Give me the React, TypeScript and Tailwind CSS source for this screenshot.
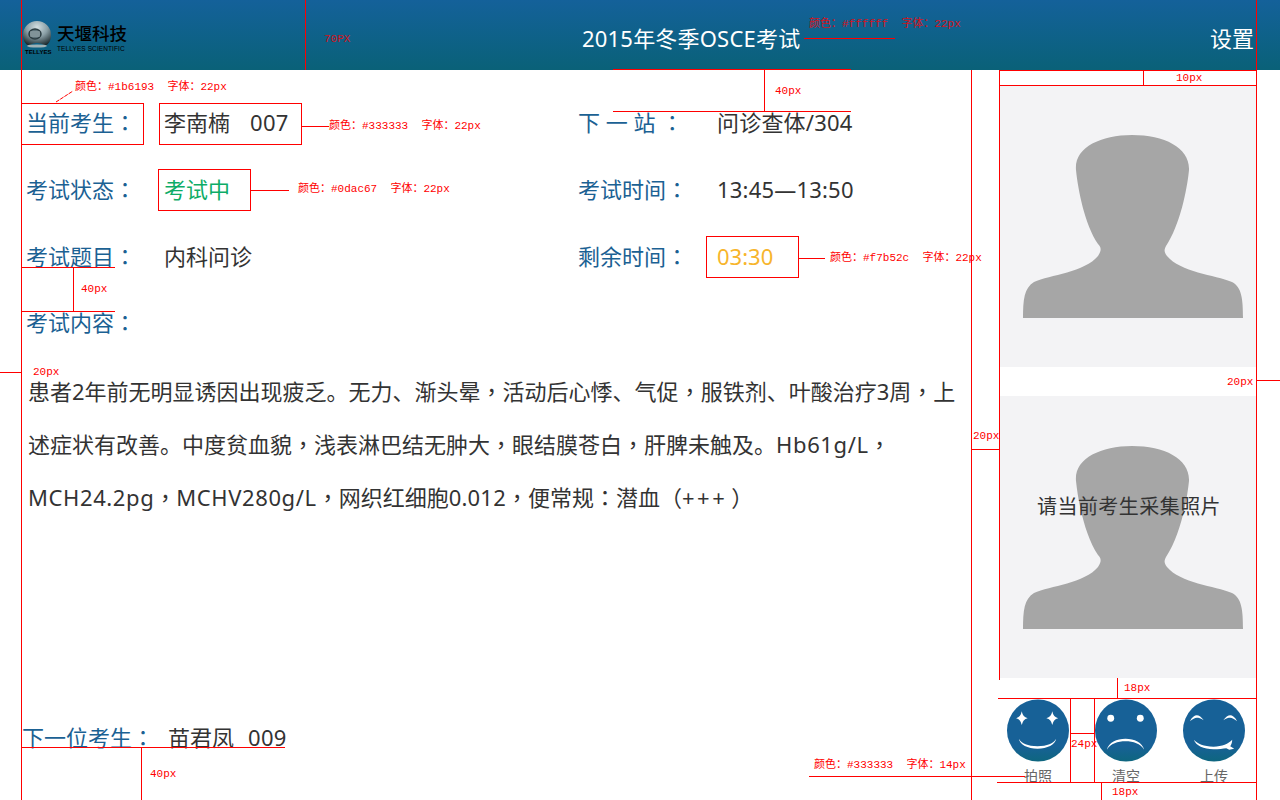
// 标注线和标注文字（设计稿上的红色标记）
const rules = [
  'left-[21px] top-0 w-px h-[800px]',
  'left-[305px] top-0 w-px h-[70px]',
  'left-[971px] top-[70px] w-px h-[730px]',
  'left-[999px] top-[70px] w-px h-[610px]',
  'left-[1256px] top-0 w-px h-[800px]',
  'left-[999px] top-[70px] w-[257px] h-px',
  'left-[999px] top-[85px] w-[257px] h-px',
  'left-[1143px] top-[70px] w-px h-[15px]',
  'left-[613px] top-[69px] w-[238px] h-px',
  'left-[613px] top-[111px] w-[238px] h-px',
  'left-[764px] top-[70px] w-px h-[41px]',
  'left-[804px] top-[38px] w-[91px] h-px',
  'left-[302px] top-[126px] w-[27px] h-px',
  'left-[251px] top-[190px] w-[38px] h-px',
  'left-[799px] top-[258px] w-[26px] h-px',
  'left-[21px] top-[267px] w-[94px] h-px',
  'left-[21px] top-[311px] w-[94px] h-px',
  'left-[73px] top-[267px] w-px h-[44px]',
  'left-0 top-[372px] w-[21px] h-px',
  'left-[971px] top-[449px] w-[28px] h-px',
  'left-[1256px] top-[380px] w-[24px] h-px',
  'left-[22px] top-[747px] w-[263px] h-px',
  'left-[141px] top-[748px] w-px h-[52px]',
  'left-[809px] top-[776px] w-[216px] h-px',
  'left-[998px] top-[698px] w-[258px] h-px',
  'left-[1117px] top-[678px] w-px h-[20px]',
  'left-[997px] top-[782px] w-[259px] h-px',
  'left-[1101px] top-[782px] w-px h-[18px]',
  'left-[1070px] top-[698px] w-px h-[84px]',
  'left-[1094px] top-[698px] w-px h-[84px]',
  'left-[1070px] top-[733px] w-[24px] h-px',
];

const boxes = [
  'left-[21px] top-[103px] w-[123px] h-[42px]',
  'left-[159px] top-[103px] w-[143px] h-[42px]',
  'left-[158px] top-[169px] w-[93px] h-[42px]',
  'left-[706px] top-[236px] w-[93px] h-[42px]',
];

const notes = [
  { text: '70PX', pos: 'left-[324px] top-[32px] opacity-80' },
  { text: '颜色：#ffffff  字体：22px', pos: 'left-[809px] top-[17px] opacity-80' },
  { text: '10px', pos: 'left-[1176px] top-[71px]' },
  { text: '40px', pos: 'left-[775px] top-[84px]' },
  { text: '颜色：#1b6193  字体：22px', pos: 'left-[75px] top-[80px]' },
  { text: '颜色：#333333  字体：22px', pos: 'left-[329px] top-[119px]' },
  { text: '颜色：#0dac67  字体：22px', pos: 'left-[298px] top-[182px]' },
  { text: '颜色：#f7b52c  字体：22px', pos: 'left-[830px] top-[251px]' },
  { text: '40px', pos: 'left-[81px] top-[282px]' },
  { text: '20px', pos: 'left-[33px] top-[365px]' },
  { text: '20px', pos: 'left-[973px] top-[429px]' },
  { text: '20px', pos: 'left-[1227px] top-[375px]' },
  { text: '40px', pos: 'left-[150px] top-[767px]' },
  { text: '颜色：#333333  字体：14px', pos: 'left-[814px] top-[758px]' },
  { text: '18px', pos: 'left-[1124px] top-[681px]' },
  { text: '18px', pos: 'left-[1112px] top-[785px]' },
  { text: '24px', pos: 'left-[1071px] top-[737px]' },
];

// 标点要居中，所以单独用 TC 字形
function Zh({ children }: { children: string }) {
  return (
    <>
      {children.split(/([，：（）])/).map((part, i) =>
        i % 2 === 1 ? (
          <span key={i} className="font-['Noto_Sans','Noto_Sans_CJK_TC',sans-serif]">
            {part}
          </span>
        ) : (
          part
        ),
      )}
    </>
  );
}

function Logo() {
  return (
    <div className="flex items-start gap-[6px] mt-[20px]">
      <div className="relative w-[29px] h-[38px]">
        <svg width="30" height="32" viewBox="0 0 30 32">
          <defs>
            <radialGradient id="sphere" cx="0.5" cy="0.25" r="0.75">
              <stop offset="0" stopColor="#d3dfe2" />
              <stop offset="0.5" stopColor="#8ba0a7" />
              <stop offset="1" stopColor="#1f2d31" />
            </radialGradient>
          </defs>
          <path d="M1 15A14 14 0 0 1 29 15C29 20 27 24 23 26C19 22 11 22 7 26C3 24 1 20 1 15Z" fill="url(#sphere)" />
          <ellipse cx="13" cy="14" rx="6" ry="5" fill="#5d7279" stroke="#2c3d42" strokeWidth="1.5" />
          <path d="M8 14h10M8 12h10M8 16h10" stroke="#c5d2d6" strokeWidth="0.7" />
          <ellipse cx="15" cy="26" rx="10" ry="1.6" fill="#9fb1b5" />
        </svg>
        <span className="absolute left-[3px] top-[28px] text-[6px] font-bold leading-[8px] text-black font-['Liberation_Sans',sans-serif] whitespace-nowrap">
          TELLYES
        </span>
      </div>
      <div className="pt-[1px]">
        <div className="text-[17.5px] leading-[24px] font-medium text-black font-['Noto_Sans_CJK_SC',sans-serif] whitespace-nowrap">
          天堰科技
        </div>
        <div className="text-[6.5px] leading-[8px] tracking-[0.1px] text-black font-['Liberation_Sans',sans-serif] whitespace-nowrap">
          TELLYES SCIENTIFIC
        </div>
      </div>
    </div>
  );
}

function Silhouette() {
  return (
    <svg className="block" width="257" height="282" viewBox="999 85 257 282">
      <path
        d="M1023 318C1023 300 1024 288 1034 282C1050 275 1085 272 1098 256C1102 250 1101 247 1098 244C1085 225 1078 190 1076 170C1074 148 1100 135 1132 135C1165 135 1190 148 1189 170C1187 190 1180 225 1166 246C1164 250 1164 252 1167 256C1180 272 1215 275 1232 282C1242 287 1243 300 1243 318Z"
        fill="#a6a6a6"
      />
    </svg>
  );
}

function FaceBase({ id, children }: { id: string; children: React.ReactNode }) {
  return (
    <svg width="62" height="63" viewBox="0 0 63 63">
      <defs>
        <linearGradient id={id} x1="0" y1="0" x2="0" y2="1">
          <stop offset="0" stopColor="#176197" />
          <stop offset="0.75" stopColor="#176197" />
          <stop offset="1" stopColor="#0e667f" />
        </linearGradient>
      </defs>
      <circle cx="31.5" cy="31.5" r="31.5" fill={`url(#${id})`} />
      {children}
    </svg>
  );
}

const star = (cx: number, cy: number) =>
  `M${cx} ${cy - 7}Q${cx + 1} ${cy - 1} ${cx + 6} ${cy}Q${cx + 1} ${cy + 1} ${cx} ${cy + 7}Q${cx - 1} ${cy + 1} ${cx - 6} ${cy}Q${cx - 1} ${cy - 1} ${cx} ${cy - 7}Z`;

function FaceCamera() {
  return (
    <FaceBase id="f1">
      <path d={star(15, 19)} fill="#fff" />
      <path d={star(46, 19)} fill="#fff" />
      <path d="M12 40C13 46 21 50 31 50C41 50 49 46 50 40C47 45 41 47.5 31 47.5C21 47.5 15 45 12 40Z" fill="#fff" />
    </FaceBase>
  );
}

function FaceClear() {
  return (
    <FaceBase id="f2">
      <circle cx="16" cy="19" r="3.5" fill="#fff" />
      <circle cx="46" cy="19" r="3.5" fill="#fff" />
      <path d="M12 51C14 44 22 40 31 40C40 40 48 44 50 51C46 45 39 42.5 31 42.5C23 42.5 16 45 12 51Z" fill="#fff" />
    </FaceBase>
  );
}

function FaceUpload() {
  return (
    <FaceBase id="f3">
      <path d="M7 22C9 18 12 16 14 16C16 16 19 18 21 21C18 19 16 18.5 14 18.5C12 18.5 10 20 7 22Z" fill="#fff" />
      <path d="M41 21C43 18 46 16 48 16C50 16 53 18 55 22C52 20 50 18.5 48 18.5C46 18.5 44 19 41 21Z" fill="#fff" />
      <path d="M11 41C13 47 21 50.5 31 50.5C36 50.5 41 50 44 49.5L47 51L52 50L48 47.5C49 46 50 44 50 41C46 45 40 48 31 48C21 48 15 45 11 41Z" fill="#fff" />
    </FaceBase>
  );
}

const tools = [
  { label: '拍照', Face: FaceCamera },
  { label: '清空', Face: FaceClear },
  { label: '上传', Face: FaceUpload },
];

function Field({ label, children }: { label: string; children: React.ReactNode }) {
  return (
    <div className="flex items-center h-[42px] mb-[25px] whitespace-pre">
      <span className="w-[138px] text-[#1b6193]">
        <Zh>{label}</Zh>
      </span>
      {children}
    </div>
  );
}

export default function App() {
  return (
    <div className="relative w-[1280px] h-[800px] overflow-hidden bg-white text-[22px] text-[#333333] font-['Noto_Sans','Noto_Sans_CJK_SC',sans-serif]">
      <header className="flex items-start justify-between h-[70px] pl-[22px] pr-[26px] bg-gradient-to-b from-[#14619a] to-[#0a6178] text-white">
        <Logo />
        <span className="absolute left-[582px] top-[23px] leading-[30px] tracking-[0.2px] whitespace-nowrap">2015年冬季OSCE考试</span>
        <span className="mt-[23px] leading-[30px]">设置</span>
      </header>

      <div className="flex">
        <main className="relative w-[971px] h-[730px] pl-[26px] pt-[31px]">
          <div className="grid grid-cols-[552px_1fr]">
            <div>
              <Field label="当前考生：">
                <span>
                  李南楠<span className="ml-[20px] tracking-[0.3px]">007</span>
                </span>
              </Field>
              <Field label="考试状态：">
                <span className="text-[#0dac67]">考试中</span>
              </Field>
              <Field label="考试题目：">
                <span>内科问诊</span>
              </Field>
            </div>
            <div>
              <Field label="下 一 站 ：">
                <span className="ml-[1px] tracking-[0.2px]">问诊查体/304</span>
              </Field>
              <Field label="考试时间：">
                <span className="ml-[1px] tracking-[0.2px]">13:45—13:50</span>
              </Field>
              <Field label="剩余时间：">
                <span className="ml-[1px] text-[#f7b52c]">03:30</span>
              </Field>
            </div>
          </div>
          <div className="text-[#1b6193] leading-[30px] mt-[5px]">
            <Zh>考试内容：</Zh>
          </div>
          <p className="w-[935px] ml-[2px] mt-[28px] leading-[53px]">
            <Zh>患者2年前无明显诱因出现疲乏。无力、渐头晕，活动后心悸、气促，服铁剂、叶酸治疗3周，上述症状有改善。中度贫血貌，浅表淋巴结无肿大，眼结膜苍白，肝脾未触及。</Zh>
            <span className="tracking-[0.6px]">Hb61g/L</span>
            <Zh>，</Zh>
            <span className="tracking-[0.6px]">MCH24.2pg</span>
            <Zh>，</Zh>
            <span className="tracking-[0.6px]">MCHV280g/L</span>
            <Zh>，网织红细胞</Zh>
            <span className="tracking-[0.2px]">0.012</span>
            <Zh>，便常规：潜血（</Zh>
            <span className="tracking-[2.5px]">+++</span>
            <span className="ml-[4px]">
              <Zh>）</Zh>
            </span>
          </p>
          <div className="absolute left-[22px] top-[652px] leading-[30px] whitespace-pre">
            <span className="text-[#1b6193]">
              <Zh>下一位考生：</Zh>
            </span>
            <span className="ml-[14px]">
              苗君凤<span className="ml-[14px] tracking-[0.3px]">009</span>
            </span>
          </div>
        </main>

        <aside className="ml-[28px] w-[257px] pt-[15px]">
          <div className="bg-[#f3f3f5]">
            <Silhouette />
          </div>
          <div className="relative mt-[29px] bg-[#f3f3f5]">
            <Silhouette />
            <span className="absolute left-[38px] top-[96px] text-[20px] tracking-[0.45px] leading-[30px] whitespace-nowrap">请当前考生采集照片</span>
          </div>
          <div className="flex justify-between pl-[8px] pr-[11px] mt-[21px]">
            {tools.map(({ label, Face }) => (
              <div key={label} className="flex flex-col items-center w-[62px]">
                <Face />
                <span className="text-[14px] leading-[20px] mt-[4px] text-[#666666]">{label}</span>
              </div>
            ))}
          </div>
        </aside>
      </div>

      {boxes.map((pos) => (
        <div key={pos} className={`absolute border border-[#ff0000] ${pos}`} />
      ))}
      {rules.map((pos) => (
        <div key={pos} className={`absolute bg-[#ff0000] ${pos}`} />
      ))}
      <svg className="absolute left-[54px] top-[88px]" width="22" height="16" viewBox="0 0 22 16">
        <path d="M2 14L19 3" stroke="#ff0000" strokeWidth="1" strokeDasharray="4 1" />
      </svg>
      {notes.map((n) => (
        <span
          key={n.text + n.pos}
          className={`absolute text-[11px] leading-[14px] text-[#ff0000] whitespace-pre font-['Liberation_Mono','Noto_Sans_CJK_SC',monospace] ${n.pos}`}
        >
          {n.text}
        </span>
      ))}
    </div>
  );
}
